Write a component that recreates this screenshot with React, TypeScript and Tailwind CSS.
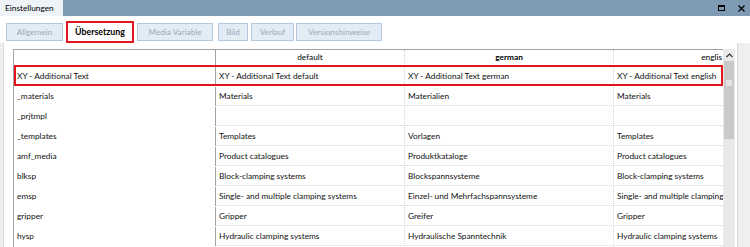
import React from 'react';

type Row = [string, string, string, string];

const rows: Row[] = [
    ['XY - Additional Text', 'XY - Additional Text default', 'XY - Additional Text german', 'XY - Additional Text english'],
    ['_materials', 'Materials', 'Materialien', 'Materials'],
    ['_prjtmpl', '', '', ''],
    ['_templates', 'Templates', 'Vorlagen', 'Templates'],
    ['amf_media', 'Product catalogues', 'Produktkataloge', 'Product catalogues'],
    ['blksp', 'Block-clamping systems', 'Blockspannsysteme', 'Block-clamping systems'],
    ['emsp', 'Single- and multiple clamping systems', 'Einzel- und Mehrfachspannsysteme', 'Single- and multiple clamping systems'],
    ['gripper', 'Gripper', 'Greifer', 'Gripper'],
    ['hysp', 'Hydraulic clamping systems', 'Hydraulische Spanntechnik', 'Hydraulic clamping systems'],
];

const tabs = [
    { label: 'Allgemein', w: 'w-[57px]', ml: 'ml-[6px]' },
    { label: 'Übersetzung', w: 'w-[68px]', ml: 'ml-[3px]', active: true },
    { label: 'Media Variable', w: 'w-[76px]', ml: 'ml-[3px]' },
    { label: 'Bild', w: 'w-[30px]', ml: 'ml-[5px]' },
    { label: 'Verlauf', w: 'w-[43px]', ml: 'ml-[3px]' },
    { label: 'Versionshinweise', w: 'w-[86px]', ml: 'ml-[2px]' },
];

const TitleBar: React.FC = () => (
    <div className="flex h-[16px] bg-[#7e9bb3]">
        <div className="flex items-center bg-[#eef3f8] pl-[5px] w-[63px] text-[8.3px] text-black">Einstellungen</div>
        <div className="flex-1" />
        <div className="flex items-center gap-[13px] pr-[5px]">
            <div className="w-[7px] h-[6px] border border-black border-t-2" />
            <svg width="7" height="7" viewBox="0 0 7 7">
                <path d="M0.5 0.5 L6.5 6.5 M6.5 0.5 L0.5 6.5" stroke="#000" strokeWidth="1.2" />
            </svg>
        </div>
    </div>
);

const Tabs: React.FC = () => (
    <div className="flex h-[27px] bg-white">
        {tabs.map((t) =>
            t.active ? (
                <div
                    key={t.label}
                    className={`${t.w} ${t.ml} mt-[5px] h-[22px] flex items-center justify-center border-2 border-[#e3141c] bg-white font-bold text-[8.8px] text-black`}
                >
                    {t.label}
                </div>
            ) : (
                <div
                    key={t.label}
                    className={`${t.w} ${t.ml} mt-[7px] h-[18px] flex items-center justify-center border border-[#b3c8da] bg-[#e1ecf5] text-[8.2px] text-[#9aa9b6]`}
                >
                    {t.label}
                </div>
            )
        )}
    </div>
);

const ScrollBar: React.FC = () => (
    <div className="w-[12px] flex flex-col bg-[#e9e9e9]">
        <div className="h-[12px] flex items-center justify-center bg-[#e9e9e9]">
            <svg width="7" height="5" viewBox="0 0 7 5">
                <path d="M0.5 4 L3.5 1 L6.5 4" stroke="#333" strokeWidth="1.2" fill="none" />
            </svg>
        </div>
        <div className="mx-[1px] h-[78px] bg-[#c9c9c9] flex flex-col items-center pt-[19px]">
            <div className="w-[6px] h-[6px] bg-[#e4e4e4]" />
        </div>
    </div>
);

const Grid: React.FC = () => (
    <div className="w-[710px] flex flex-col border-l border-t border-[#a3a3a3]">
        <div className="flex h-[16px] text-[8.3px] text-black">
            <div className="w-[202px] border-r border-[#a3a3a3]" />
            <div className="w-[189px] flex items-center justify-center border-b border-r border-dotted border-[#d6d6d6]">default</div>
            <div className="w-[209px] flex items-center justify-center font-bold border-b border-r border-dotted border-[#d6d6d6]">german</div>
            <div className="flex-1 flex items-center justify-end pr-[1px] overflow-hidden border-b border-dotted border-[#d6d6d6]">englis</div>
        </div>
        {rows.map((r, i) => (
            <div key={r[0]} className="relative flex h-[20px] pt-[1px] text-[8.3px] text-[#111]">
                <div className="w-[202px] flex items-center pl-[3px] border-r border-[#a3a3a3]">{r[0]}</div>
                <div className="w-[189px] flex items-center pl-[3px] border-b border-r border-dotted border-[#d6d6d6] whitespace-nowrap overflow-hidden">{r[1]}</div>
                <div className="w-[209px] flex items-center pl-[3px] border-b border-r border-dotted border-[#d6d6d6] whitespace-nowrap overflow-hidden">{r[2]}</div>
                <div className="flex-1 flex items-center pl-[3px] border-b border-dotted border-[#d6d6d6] whitespace-nowrap overflow-hidden">{r[3]}</div>
                {i === 0 && <div className="absolute inset-0 -top-[1px] border-2 border-[#e3141c] pointer-events-none" />}
            </div>
        ))}
    </div>
);

export default function App() {
    return (
        <div className="w-[750px] h-[247px] overflow-hidden bg-[#efefef] font-['Lato',sans-serif]">
            <TitleBar />
            <Tabs />
            <div className="flex h-[204px]">
                <div className="w-[3px]" />
                <div className="w-[735px] bg-white border-l border-r border-[#dadada] pl-[9px] pt-[6px] flex">
                    <Grid />
                    <ScrollBar />
                </div>
            </div>
        </div>
    );
}
